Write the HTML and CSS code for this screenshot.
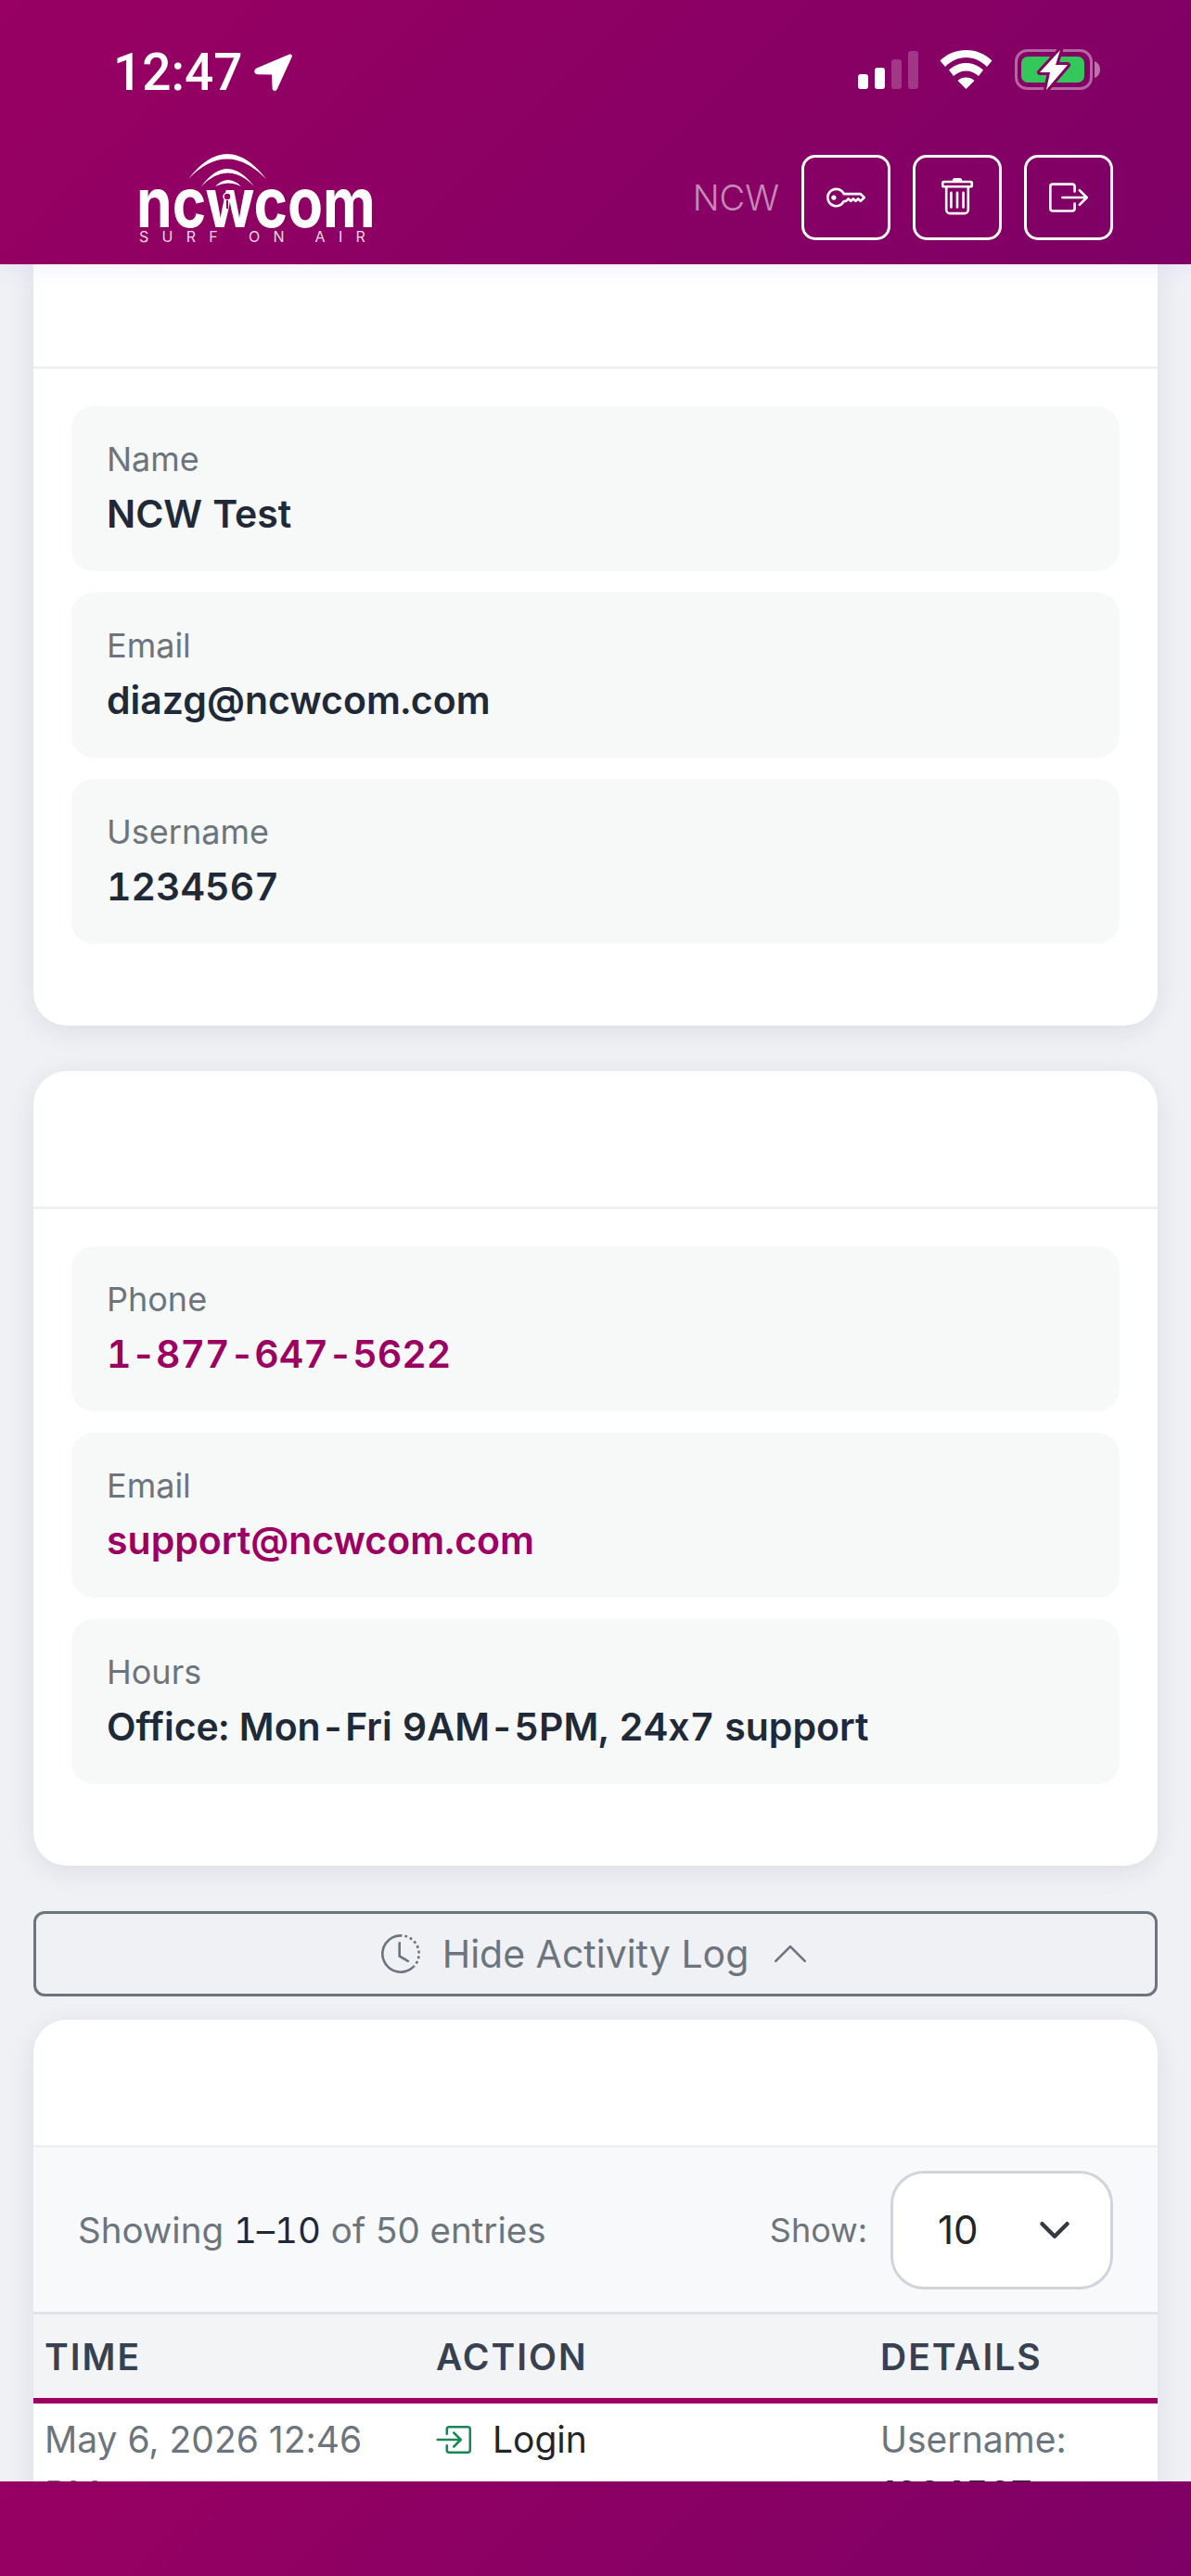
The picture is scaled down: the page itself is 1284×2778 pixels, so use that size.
FILE: index.html
```html
<!DOCTYPE html>
<html lang="en">
<head>
    <meta charset="UTF-8">
    <meta name="viewport" content="width=device-width, initial-scale=1.0">
    <title>NCW Account</title>
    <link rel="stylesheet" href="styles.css">
</head>
<body>
    <header class="header">
        <div class="status-bar">
            <div class="status-time">
                <span>12:47</span>
                <svg class="status-arrow" viewBox="0 0 41 40"><path fill="#fff" d="M38 .6 2.6 15.6C-.8 17.2-.4 22 3.6 22.2L19 22.6l.6 15c.2 2.8 3.6 3.4 5 .8L40.6 3.6C41.6 1.400 40 -.2 38 .6Z"/></svg>
            </div>
            <div class="status-icons">
                <div class="signal">
                    <span class="bar bar-1"></span>
                    <span class="bar bar-2"></span>
                    <span class="bar bar-3 dim"></span>
                    <span class="bar bar-4 dim"></span>
                </div>
                <svg class="wifi" viewBox="0 0 57 42" fill="#fff">
                    <path d="M28.500 0C17 0 7.500 4.500.5 11.500L6 18C12 12 19.500 8 28.500 8S45 12 51 18l5.500-6.500C49.500 4.500 40 0 28.500 0Z"/>
                    <path d="M28.500 14C21.500 14 15.500 16.500 10 21.500L15 28C19 24.500 23.500 22.500 28.500 22.500S38 24.500 42 28l5-6.500C41.500 16.500 35.500 14 28.500 14Z"/>
                    <path d="M28.500 29.500C25 29.500 22 30.500 19.500 33L28.500 42 37.500 33C35 30.500 32 29.500 28.500 29.500Z"/>
                </svg>
                <svg class="battery" viewBox="0 0 92 46">
                    <rect x="1.500" y="2.500" width="81" height="41" rx="12" fill="none" stroke="#fff" stroke-opacity=".4" stroke-width="3"/>
                    <rect x="7" y="9" width="68" height="28" rx="7" fill="#34c759"/>
                    <path d="M86 14c3 1 6 4 6 9s-3 8-6 9Z" fill="#fff" fill-opacity=".45"/>
                    <path d="M49 2 27 26h11l-4 19 23-27H44Z" fill="#fff" stroke="#860064" stroke-width="6" stroke-linejoin="round" paint-order="stroke"/>
                </svg>
            </div>
        </div>
        <div class="nav-row">
            <div class="logo">
                <svg class="logo-mark" viewBox="0 0 252 60">
                    <path fill="#fff" d="M53 28Q95-26 137 28 95-15 53 28Z"/>
                    <path fill="#fff" d="M67 36Q95-2 124 36 95 7 67 36Z"/>
                    <path fill="#fff" d="M82 36Q96 22 110 36 96 29 82 36Z"/>
                    <circle cx="95" cy="47" r="4" fill="#950064" stroke="#fff" stroke-width="1.500"/>
                    <rect x="94" y="51" width="2" height="9" fill="#950064"/>
                </svg>
                <div class="logo-name">ncwcom</div>
                <div class="logo-tag">SURF ON AIR</div>
            </div>
            <div class="header-buttons">
                <span class="header-user">NCW</span>
                <button class="icon-btn">
                    <svg viewBox="0 0 16 16" fill="#fff"><path d="M0 8a4 4 0 0 1 7.465-2H14a.5.5 0 0 1 .354.146l1.5 1.5a.5.5 0 0 1 0 .708l-1.5 1.5a.5.5 0 0 1-.708 0L13 9.207l-.646.647a.5.5 0 0 1-.708 0L11 9.207l-.646.647a.5.5 0 0 1-.708 0L9 9.207l-.646.647A.5.5 0 0 1 8 10h-.535A4 4 0 0 1 0 8m4-3a3 3 0 1 0 2.712 4.285A.5.5 0 0 1 7.163 9h.63l.853-.854a.5.5 0 0 1 .708 0l.646.647.646-.647a.5.5 0 0 1 .708 0l.646.647.646-.647a.5.5 0 0 1 .708 0l.646.647.793-.793-1-1h-6.630a.5.5 0 0 1-.451-.285A3 3 0 0 0 4 5"/><path d="M4 8a1 1 0 1 1-2 0 1 1 0 0 1 2 0"/></svg>
                </button>
                <button class="icon-btn">
                    <svg viewBox="0 0 16 16" fill="#fff"><path d="M5.500 5.500A.5.5 0 0 1 6 6v6a.5.5 0 0 1-1 0V6a.5.5 0 0 1 .5-.5m2.500 0a.5.5 0 0 1 .5.5v6a.5.5 0 0 1-1 0V6a.5.5 0 0 1 .5-.5m3 .5a.5.5 0 0 0-1 0v6a.5.5 0 0 0 1 0z"/><path d="M14.500 3a1 1 0 0 1-1 1H13v9a2 2 0 0 1-2 2H5a2 2 0 0 1-2-2V4h-.5a1 1 0 0 1-1-1V2a1 1 0 0 1 1-1H6a1 1 0 0 1 1-1h2a1 1 0 0 1 1 1h3.500a1 1 0 0 1 1 1zM4.118 4 4 4.059V13a1 1 0 0 0 1 1h6a1 1 0 0 0 1-1V4.059L11.882 4zM2.500 3h11V2h-11z"/></svg>
                </button>
                <button class="icon-btn">
                    <svg viewBox="0 0 16 16" fill="#fff"><path d="M10 12.500a.5.5 0 0 1-.5.5h-8a.5.5 0 0 1-.5-.5v-9a.5.5 0 0 1 .5-.5h8a.5.5 0 0 1 .5.5v2a.5.5 0 0 0 1 0v-2A1.500 1.500 0 0 0 9.500 2h-8A1.500 1.500 0 0 0 0 3.500v9A1.500 1.500 0 0 0 1.500 14h8a1.500 1.500 0 0 0 1.500-1.500v-2a.5.5 0 0 0-1 0z"/><path d="M15.854 8.354a.5.5 0 0 0 0-.708l-3-3a.5.5 0 0 0-.708.708L14.293 7.500H5.500a.5.5 0 0 0 0 1h8.793l-2.147 2.146a.5.5 0 0 0 .708.708z"/></svg>
                </button>
            </div>
        </div>
    </header>

    <main class="main-content">
        <!-- account info, scrolled under the header -->
        <section class="card card-scrolled">
            <div class="card-head head-scrolled"></div>
            <div class="card-body">
                <div class="info-box">
                    <div class="info-label">Name</div>
                    <div class="info-value">NCW Test</div>
                </div>
                <div class="info-box">
                    <div class="info-label">Email</div>
                    <div class="info-value">diazg@ncwcom.com</div>
                </div>
                <div class="info-box">
                    <div class="info-label">Username</div>
                    <div class="info-value">1234567</div>
                </div>
            </div>
        </section>

        <!-- support -->
        <section class="card">
            <div class="card-head head-support"></div>
            <div class="card-body">
                <div class="info-box">
                    <div class="info-label">Phone</div>
                    <div class="info-value link">1-877-647-5622</div>
                </div>
                <div class="info-box">
                    <div class="info-label">Email</div>
                    <div class="info-value link">support@ncwcom.com</div>
                </div>
                <div class="info-box">
                    <div class="info-label">Hours</div>
                    <div class="info-value">Office: Mon-Fri 9AM-5PM, 24x7 support</div>
                </div>
            </div>
        </section>

        <button class="toggle-log">
            <svg class="toggle-clock" viewBox="0 0 16 16" fill="#6c757d"><path d="M8.515 1.019A7 7 0 0 0 8 1V0a8 8 0 0 1 .589.022zm2.004.45a7 7 0 0 0-.985-.299l.219-.976q.576.129 1.126.342zm1.37.71a7 7 0 0 0-.439-.27l.493-.87a8 8 0 0 1 .979.654l-.615.789a7 7 0 0 0-.418-.302zm1.834 1.79a7 7 0 0 0-.653-.796l.724-.69q.406.429.747.91zm.744 1.352a7 7 0 0 0-.214-.468l.893-.45a8 8 0 0 1 .45 1.088l-.95.313a7 7 0 0 0-.179-.483m.53 2.507a7 7 0 0 0-.1-1.025l.985-.17q.1.58.116 1.17zm-.131 1.538q.05-.254.081-.51l.993.123a8 8 0 0 1-.23 1.155l-.964-.267q.069-.247.12-.501m-.952 2.379q.276-.436.486-.908l.914.405q-.24.54-.555 1.038zm-.964 1.205q.183-.183.35-.378l.758.653a8 8 0 0 1-.401.432z"/><path d="M8 1a7 7 0 1 0 4.950 11.950l.707.707A8.001 8.001 0 1 1 8 0z"/><path d="M7.500 3a.5.5 0 0 1 .5.5v5.210l3.248 1.856a.5.5 0 0 1-.496.868l-3.500-2A.5.5 0 0 1 7 9V3.500a.5.5 0 0 1 .5-.5"/></svg>
            <span>Hide Activity Log</span>
            <svg class="toggle-chevron" viewBox="0 0 16 16" fill="#6c757d"><path d="M7.646 4.646a.5.5 0 0 1 .708 0l6 6a.5.5 0 0 1-.708.708L8 5.707l-5.646 5.647a.5.5 0 0 1-.708-.708z"/></svg>
        </button>

        <!-- activity log -->
        <section class="card log-card">
            <div class="card-head head-log"></div>
            <div class="log-toolbar">
                <div class="log-count">Showing <span class="log-range">1–10</span> of 50 entries</div>
                <div class="log-show">
                    <span>Show:</span>
                    <div class="log-select">
                        <span>10</span>
                        <svg viewBox="0 0 16 16" fill="none" stroke="#343a40" stroke-width="2" stroke-linecap="round" stroke-linejoin="round"><path d="m2 5 6 6 6-6"/></svg>
                    </div>
                </div>
            </div>
            <table class="log-table">
                <thead>
                    <tr>
                        <th class="col-time">Time</th>
                        <th class="col-action">Action</th>
                        <th class="col-details">Details</th>
                    </tr>
                </thead>
                <tbody>
                    <tr>
                        <td class="muted">May 6, 2026 12:46 PM</td>
                        <td>
                            <div class="log-action">
                                <svg viewBox="0 0 16 16" fill="#198754"><path d="M6 3.500a.5.5 0 0 1 .5-.5h8a.5.5 0 0 1 .5.5v9a.5.5 0 0 1-.5.5h-8a.5.5 0 0 1-.5-.5v-2a.5.5 0 0 0-1 0v2A1.500 1.500 0 0 0 6.500 14h8a1.500 1.500 0 0 0 1.500-1.500v-9A1.500 1.500 0 0 0 14.500 2h-8A1.500 1.500 0 0 0 5 3.500v2a.5.5 0 0 0 1 0z"/><path d="M11.854 8.354a.5.5 0 0 0 0-.708l-3-3a.5.5 0 1 0-.708.708L10.293 7.500H1.500a.5.5 0 0 0 0 1h8.793l-2.147 2.146a.5.5 0 0 0 .708.708z"/></svg>
                                <span>Login</span>
                            </div>
                        </td>
                        <td class="muted">Username: <span class="log-user">1234567</span></td>
                    </tr>
                </tbody>
            </table>
        </section>
    </main>

    <footer class="footer"></footer>
</body>
</html>
```

FILE: styles.css
```css
/* Global Styles */
* {
    box-sizing: border-box;
}

body {
    font-family: Inter, "Liberation Sans", sans-serif;
    font-feature-settings: "calt" 0;
    margin: 0;
    padding: 0;
    background-color: #f0f1f5;
    display: flex;
    flex-direction: column;
    height: 100vh;
    overflow: hidden;
}

/* Header */
.header {
    background: linear-gradient(135deg, #980062, #7e0066);
    color: white;
    height: 285px;
    flex: none;
    padding: 50px 84px 0;
    position: relative;
    z-index: 2;
    box-shadow: 0 6px 24px rgba(80, 50, 220, 0.07);
}

.status-bar {
    display: flex;
    align-items: flex-start;
    justify-content: space-between;
    height: 50px;
    padding: 0 14px 0 38px;
}

.status-time {
    display: flex;
    align-items: center;
    gap: 12px;
    font-family: Roboto, sans-serif;
    font-size: 55px;
    font-weight: 500;
    line-height: 1;
    height: 50px;
    margin-top: 3px;
}

.status-arrow {
    width: 41px;
    height: 40px;
}

.status-icons {
    display: flex;
    align-items: flex-start;
    gap: 23px;
    padding-top: 3px;
}

.signal {
    display: flex;
    align-items: flex-end;
    gap: 7px;
    height: 43px;
}

.bar {
    width: 11px;
    border-radius: 3px;
    background-color: #fff;
}

.bar.dim {
    background-color: rgba(255, 255, 255, 0.22);
}

.bar-1 { height: 16px; }
.bar-2 { height: 23px; }
.bar-3 { height: 32px; }
.bar-4 { height: 41px; }

.wifi {
    width: 57px;
    height: 42px;
    margin-top: 1px;
    margin-right: 1px;
}

.battery {
    width: 92px;
    height: 46px;
    margin-top: -1px;
}

.nav-row {
    display: flex;
    justify-content: space-between;
    align-items: flex-start;
    margin-top: 67px;
}

/* Logo */
.logo {
    position: relative;
    width: 252px;
    margin-left: 66px;
    margin-top: -2px;
    padding-top: 28px;
}

.logo-mark {
    position: absolute;
    top: 0;
    left: 0;
    width: 252px;
    height: 60px;
    z-index: 1;
}

.logo-name {
    font-size: 74px;
    font-weight: 700;
    line-height: 50px;
    margin-left: -3px;
    transform: scaleX(0.84);
    transform-origin: left center;
    white-space: nowrap;
}

.logo-tag {
    margin-top: 4px;
    font-size: 16px;
    line-height: 16px;
    letter-spacing: 14.300px;
    white-space: nowrap;
    color: rgba(255, 255, 255, 0.85);
}

.header-buttons {
    display: flex;
    align-items: center;
    gap: 24px;
}

.header-user {
    font-size: 38px;
    font-weight: 300;
    margin-right: -1px;
    color: rgba(255, 255, 255, 0.55);
    transform: translateX(-1px);
}

.icon-btn {
    width: 96px;
    height: 92px;
    background: none;
    border: 3px solid #fff;
    border-radius: 15px;
    padding: 0;
    display: flex;
    align-items: center;
    justify-content: center;
}

.icon-btn svg {
    width: 42px;
    height: 42px;
}

/* Main Content Styles */
.main-content {
    flex: 1;
    min-height: 0;
    overflow: hidden;
    padding: 0 36px;
}

.card {
    background-color: #fff;
    border-radius: 36px;
    box-shadow: 0 6px 30px rgba(30, 30, 70, 0.09);
    margin-bottom: 49px;
    overflow: hidden;
}

.card-scrolled {
    border-radius: 0 0 36px 36px;
}

.card-head {
    border-bottom: 3px solid #eef0f2;
}

.head-scrolled { height: 113px; }
.head-support { height: 149px; }

.card-body {
    padding: 40px 41px 88px;
    display: flex;
    flex-direction: column;
    gap: 23px;
}

.info-box {
    background-color: #f7f9f9;
    border-radius: 24px;
    height: 178px;
    padding: 30px 38px 0;
}

.info-label {
    font-size: 36px;
    line-height: 54px;
    margin-bottom: 2px;
    color: #6c757d;
}

.info-value {
    font-size: 41px;
    line-height: 60px;
    font-weight: 600;
    font-variant-numeric: tabular-nums;
    color: #1f2937;
}

.info-value.link {
    color: #9c0062;
}

/* Activity log toggle */
.toggle-log {
    width: 100%;
    height: 92px;
    background: none;
    border: 3px solid #6c757d;
    border-radius: 12px;
    color: #6c757d;
    font-family: inherit;
    font-feature-settings: inherit;
    font-size: 41px;
    display: flex;
    align-items: center;
    justify-content: center;
    gap: 24px;
    padding: 0;
}

.toggle-clock {
    width: 42px;
    height: 42px;
}

.toggle-chevron {
    width: 42px;
    height: 42px;
}

.log-card {
    margin-top: 25px;
    margin-bottom: 0;
    border-radius: 36px 36px 0 0;
}

.head-log {
    height: 138px;
    border-bottom-color: #eef0f2;
}

.log-toolbar {
    background-color: #f8f9fa;
    height: 180px;
    padding: 0 48px;
    display: flex;
    align-items: center;
    justify-content: space-between;
    border-bottom: 3px solid #e0e3e8;
    font-size: 38.500px;
    color: #6c757d;
}

.log-range {
    color: #1f2937;
    font-variant-numeric: tabular-nums;
}

.log-show {
    display: flex;
    align-items: center;
    gap: 25px;
    font-size: 36px;
}

.log-select {
    width: 240px;
    height: 128px;
    background-color: #fff;
    border: 3px solid #d1d5db;
    border-radius: 36px;
    display: flex;
    align-items: center;
    justify-content: space-between;
    padding: 0 42px 0 48px;
    font-size: 42px;
    color: #212529;
}

.log-select svg {
    width: 36px;
    height: 36px;
}

/* Log table */
.log-table {
    width: 100%;
    border-collapse: collapse;
    table-layout: fixed;
}

.col-time { width: 422px; }
.col-action { width: 479px; }

.log-table th {
    background-color: #f3f4f6;
    color: #374151;
    font-size: 39px;
    font-weight: 600;
    letter-spacing: 2px;
    text-transform: uppercase;
    text-align: left;
    padding: 0 12px;
    height: 93px;
    border-bottom: 6px solid #9c0062;
}

.log-table td {
    font-size: 39px;
    line-height: 58.500px;
    padding: 10px 12px;
    vertical-align: top;
    color: #212529;
}

.log-table td.muted {
    color: #6c757d;
}

.log-action {
    display: flex;
    align-items: center;
    gap: 23px;
}

.log-action svg {
    width: 40px;
    height: 40px;
    margin-left: -2px;
}

.log-user {
    color: #212529;
    font-weight: 600;
}

.footer {
    height: 102px;
    flex: none;
    background: linear-gradient(135deg, #980062, #7e0066);
    position: relative;
    z-index: 2;
}
```
